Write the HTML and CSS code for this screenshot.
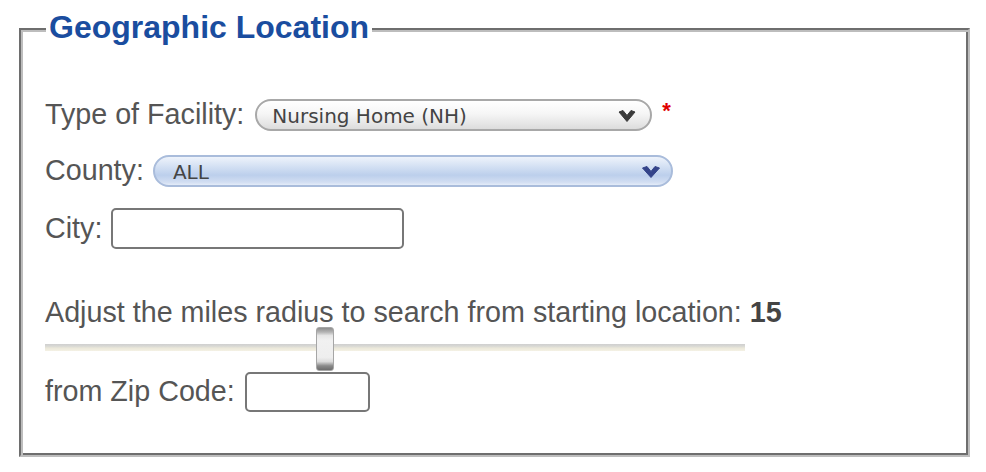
FILE: index.html
```html
<!DOCTYPE html>
<html lang="en">
<head>
<meta charset="utf-8">
<title>Geographic Location</title>
<link rel="stylesheet" href="styles.css">
</head>
<body>
<fieldset class="geo">
  <legend class="geo-legend">Geographic Location</legend>

  <div class="row row-facility">
    <span class="label">Type of Facility:</span>
    <div class="select select-grey">
      <span class="select-text">Nursing Home (NH)</span>
      <svg class="chev" width="18" height="14" viewBox="0 0 18 14"><polygon points="1,3 5,1.5 9,6.5 13,1.5 17,3 9,12.5" fill="#3a3a3a" stroke="#3a3a3a" stroke-width="1" stroke-linejoin="round"/></svg>
    </div>
    <span class="req">*</span>
  </div>

  <div class="row row-county">
    <span class="label">County:</span>
    <div class="select select-blue">
      <span class="select-text">ALL</span>
      <svg class="chev" width="20" height="14" viewBox="0 0 20 14"><polygon points="1.5,3 6,1.5 10,6.5 14,1.5 18.5,3 10,12.5" fill="#34448a" stroke="#34448a" stroke-width="1" stroke-linejoin="round"/></svg>
    </div>
  </div>

  <div class="row row-city">
    <span class="label">City:</span>
    <input class="text-input city-input" type="text">
  </div>

  <div class="radius-text">Adjust the miles radius to search from starting location: <b>15</b></div>

  <div class="slider">
    <div class="slider-track"></div>
    <div class="slider-handle" style="left: 271px;"></div>
  </div>

  <div class="row row-zip">
    <span class="label">from Zip Code:</span>
    <input class="text-input zip-input" type="text">
  </div>
</fieldset>
</body>
</html>
```

FILE: styles.css
```css
html, body {
  margin: 0;
  padding: 0;
  background: #ffffff;
}

body {
  font-family: "Liberation Sans", Arial, sans-serif;
  color: #555555;
}

.geo {
  box-sizing: border-box;
  width: 951px;
  margin: 9px 0 0 19px;
  padding: 50px 20px 43px 24px;
  border-style: solid;
  border-width: 2px;
  border-color: #6e6e6e #bdbdbd #bdbdbd #6e6e6e;
  box-shadow: inset 2px 2px 0 #bdbdbd, inset -2px -2px 0 #6e6e6e;
  min-width: 0;
}

.geo-legend {
  font-family: "Liberation Sans", Arial, sans-serif;
  font-weight: bold;
  font-size: 32px;
  line-height: 36px;
  color: #1a4d9f;
  padding: 0 3px 4px 3px;
  background: #ffffff;
  margin-left: 1px;
}

.row {
  display: flex;
  align-items: center;
}

.label {
  font-size: 28.7px;
  line-height: 32px;
  color: #555555;
  white-space: nowrap;
  margin-top: -2px;
}

.row-facility {
  height: 32px;
  gap: 11px;
}

.row-county {
  height: 32px;
  margin-top: 24px;
  gap: 9px;
}

.row-city {
  height: 41px;
  margin-top: 21px;
  gap: 9px;
}

.select {
  box-sizing: border-box;
  height: 32px;
  border-radius: 16px;
  display: flex;
  align-items: center;
  justify-content: space-between;
  font-family: "DejaVu Sans", Verdana, sans-serif;
  font-size: 20px;
  color: #444444;
}

.select-grey {
  width: 397px;
  padding: 0 14px 0 15px;
  border: 2px solid #a8a8a8;
  background: linear-gradient(#ffffff 0%, #f6f6f6 45%, #e6e6e6 80%, #dcdcdc 100%);
  box-shadow: inset 0 1px 0 #ffffff;
}

.select-blue {
  width: 520px;
  padding: 0 10px 0 18px;
  border: 2px solid #a9bcdb;
  background: linear-gradient(#eef3fb 0%, #d3e0f3 35%, #bccfec 65%, #d2def2 90%, #e4ecf8 100%);
}

.select-text {
  line-height: 24px;
  padding-top: 2px;
}

.chev {
  display: block;
  flex: none;
  margin-top: 1px;
}

.req {
  color: #e00000;
  font-weight: bold;
  font-size: 22px;
  align-self: flex-start;
  line-height: 20px;
  margin-top: 2px;
  margin-left: -1px;
}

.text-input {
  box-sizing: border-box;
  border: 2px solid #777777;
  border-radius: 5px;
  background: #ffffff;
  margin: 0;
  padding: 0 6px;
  font-size: 20px;
  outline: none;
}

.city-input {
  width: 293px;
  height: 41px;
}

.radius-text {
  margin-top: 47px;
  font-size: 28.7px;
  line-height: 32px;
  color: #555555;
  white-space: nowrap;
}

.radius-text b {
  color: #444444;
}

.slider {
  position: relative;
  width: 700px;
  height: 44px;
  margin-top: -1px;
  display: flex;
  align-items: center;
}

.slider-track {
  width: 100%;
  height: 7px;
  margin-top: -4px;
  background: linear-gradient(#cfcfcf 0%, #d8d8d4 30%, #ebe8da 60%, #f4f1e4 100%);
}

.slider-handle {
  position: absolute;
  top: 0;
  width: 18px;
  height: 44px;
  box-sizing: border-box;
  border-radius: 3px;
  border: 1px solid #a6a6a6;
  background: linear-gradient(#8e8e8e 0%, #b5b5b5 10%, #e6e6e6 18%, #f1f1f1 30%, #eeeeee 70%, #dcdcdc 80%, #8a8a8a 90%, #6c6c6c 100%);
}

.row-zip {
  height: 40px;
  margin-top: 1px;
  gap: 10px;
}

.zip-input {
  width: 125px;
  height: 40px;
}
```
